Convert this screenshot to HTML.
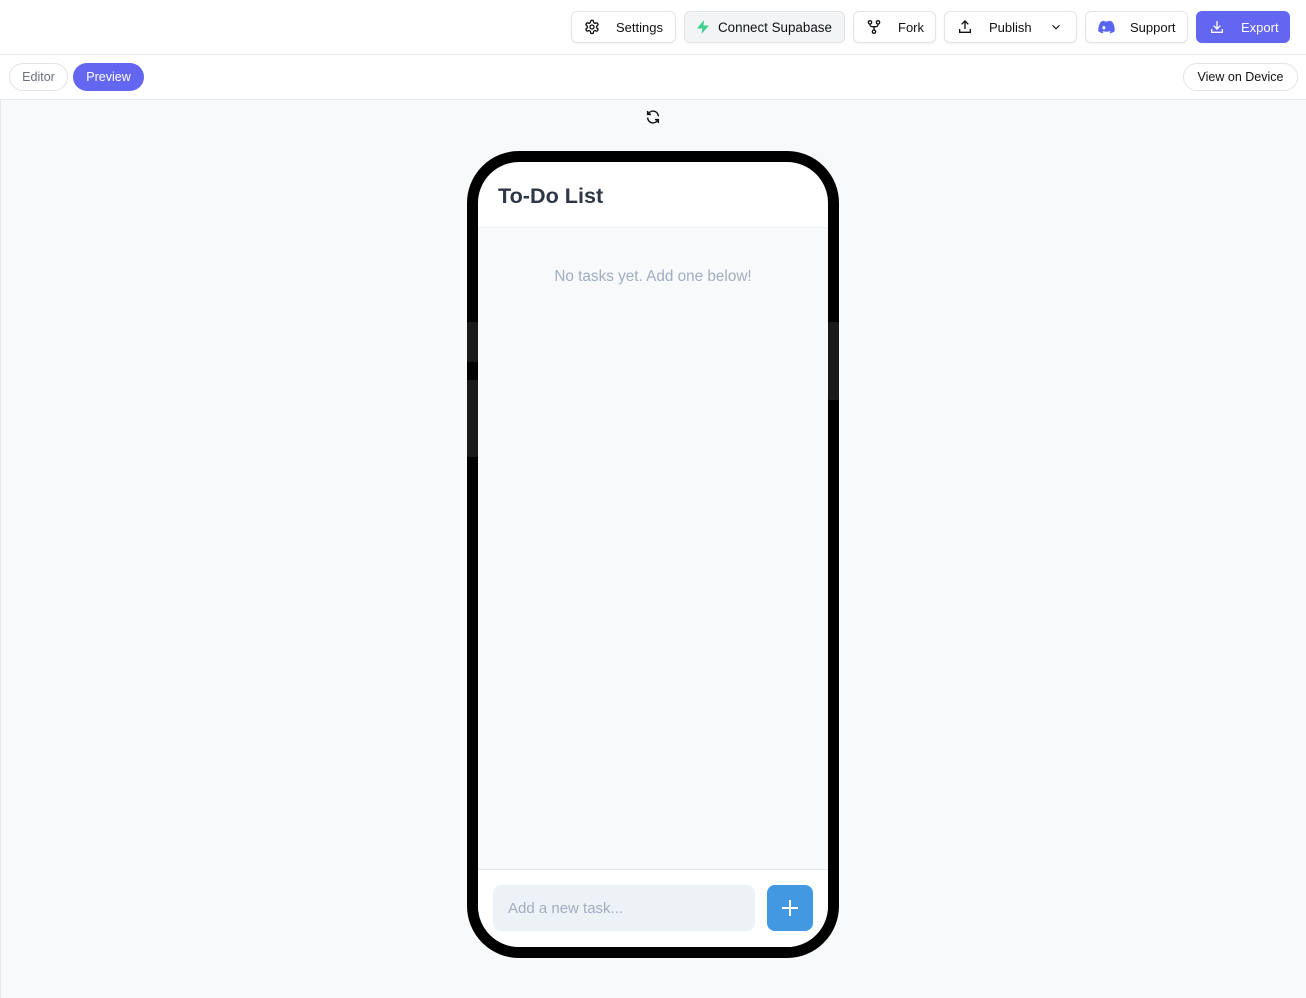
<!DOCTYPE html>
<html><head><style>
*{box-sizing:border-box;margin:0;padding:0}
body{width:1306px;height:998px;overflow:hidden;font-family:"Liberation Sans",sans-serif;background:#f8f9fb;position:relative}
.top{position:absolute;left:0;top:0;width:1306px;height:55px;background:#fff;border-bottom:1px solid #e5e7eb}
.btn{position:absolute;top:11px;height:32px;border:1px solid #e2e4e8;border-radius:6px;background:#fff;font-size:13px;color:#111;display:flex;align-items:center;box-shadow:0 1px 2px rgba(0,0,0,.05)}
.btn svg{position:absolute}
.bar2{position:absolute;left:0;top:55px;width:1306px;height:45px;background:#fff;border-bottom:1px solid #e5e7eb}
.pill{position:absolute;top:8px;height:28px;border-radius:14px;font-size:12.5px;display:flex;align-items:center;justify-content:center}
.phone{position:absolute;left:467px;top:151px;width:372px;height:807px;border:11px solid #000;border-radius:52px;background:#fff;overflow:hidden}
.side{position:absolute;background:#1a1a1a;width:11px;border-radius:2px}
</style></head><body>
<div class="top">
 <div class="btn" style="left:571px;width:105px"><svg style="left:12px" width="16" height="16" viewBox="0 0 24 24" fill="none" stroke="#111" stroke-width="2"><circle cx="12" cy="12" r="3"/><path d="M12.2 2h-.4a2 2 0 0 0-2 2v.2a2 2 0 0 1-1 1.7l-.4.3a2 2 0 0 1-2 0l-.2-.1a2 2 0 0 0-2.7.7l-.2.4a2 2 0 0 0 .7 2.7l.2.1a2 2 0 0 1 1 1.7v.5a2 2 0 0 1-1 1.7l-.2.1a2 2 0 0 0-.7 2.7l.2.4a2 2 0 0 0 2.7.7l.2-.1a2 2 0 0 1 2 0l.4.2a2 2 0 0 1 1 1.7v.2a2 2 0 0 0 2 2h.4a2 2 0 0 0 2-2v-.2a2 2 0 0 1 1-1.7l.4-.2a2 2 0 0 1 2 0l.2.1a2 2 0 0 0 2.7-.7l.2-.4a2 2 0 0 0-.7-2.7l-.2-.1a2 2 0 0 1-1-1.7v-.5a2 2 0 0 1 1-1.7l.2-.1a2 2 0 0 0 .7-2.7l-.2-.4a2 2 0 0 0-2.7-.7l-.2.1a2 2 0 0 1-2 0l-.4-.3a2 2 0 0 1-1-1.7V4a2 2 0 0 0-2-2z"/></svg><span style="position:absolute;left:44px">Settings</span></div>
 <div class="btn" style="left:684px;width:161px;background:#f3f4f6"><svg style="left:10px" width="16" height="16" viewBox="0 0 16 16"><path d="M9 1 2 9.5h5.5L6.5 15 14 6.5H8.5z" fill="#3ecf8e"/></svg><span style="position:absolute;left:33px;font-size:13.4px">Connect Supabase</span></div>
 <div class="btn" style="left:853px;width:83px"><svg style="left:12px" width="16" height="16" viewBox="0 0 24 24" fill="none" stroke="#111" stroke-width="2"><circle cx="6" cy="5" r="2.5"/><circle cx="18" cy="5" r="2.5"/><circle cx="12" cy="19" r="2.5"/><path d="M6 7.5v1a3 3 0 0 0 3 3h6a3 3 0 0 0 3-3v-1M12 11.5v5"/></svg><span style="position:absolute;left:44px">Fork</span></div>
 <div class="btn" style="left:944px;width:133px"><svg style="left:12px" width="16" height="16" viewBox="0 0 24 24" fill="none" stroke="#111" stroke-width="2"><path d="M12 15V3M7 8l5-5 5 5M4 15v5h16v-5"/></svg><span style="position:absolute;left:44px">Publish</span><svg style="left:104px" width="14" height="14" viewBox="0 0 24 24" fill="none" stroke="#111" stroke-width="2"><path d="M6 9l6 6 6-6"/></svg></div>
 <div class="btn" style="left:1085px;width:103px"><svg style="left:12px" width="17" height="14" viewBox="0 0 24 18"><path d="M20 1.5A19.8 19.8 0 0 0 15.1 0l-.6 1.3a18 18 0 0 0-5.1 0L8.9 0A19.7 19.7 0 0 0 4 1.5C.9 6.2 0 10.7.5 15.2A20 20 0 0 0 6.5 18l1.3-2.1a13 13 0 0 1-2-1l.5-.4a14 14 0 0 0 11.4 0l.5.4a13 13 0 0 1-2 1l1.3 2.1a20 20 0 0 0 6-3c.6-5.2-.8-9.7-3.5-13.5zM8.3 12.4c-1.2 0-2.1-1.1-2.1-2.4s.9-2.4 2.1-2.4 2.2 1.1 2.1 2.4c0 1.3-.9 2.4-2.1 2.4zm7.4 0c-1.200-2.1-1.1-2.1-2.4s.9-2.4 2.1-2.4 2.2 1.1 2.1 2.4c0 1.3-.9 2.4-2.1 2.4z" fill="#5865f2"/></svg><span style="position:absolute;left:44px">Support</span></div>
 <div class="btn" style="left:1196px;width:94px;background:#6366f1;border-color:#6366f1;color:#fff"><svg style="left:12px" width="16" height="16" viewBox="0 0 24 24" fill="none" stroke="#fff" stroke-width="2"><path d="M12 3v12M7 10l5 5 5-5M4 15v5h16v-5"/></svg><span style="position:absolute;left:44px">Export</span></div>
</div>
<div class="bar2">
 <div class="pill" style="left:9px;width:59px;border:1px solid #e2e4e8;color:#6b7280">Editor</div>
 <div class="pill" style="left:73px;width:71px;background:#6366f1;color:#fff">Preview</div>
 <div class="pill" style="left:1183px;width:115px;border:1px solid #e2e4e8;color:#111;background:#fff">View on Device</div>
</div>
<div style="position:absolute;left:0;top:100px;width:1px;height:898px;background:#e5e7eb"></div>
<svg style="position:absolute;left:645px;top:109px" width="16" height="16" viewBox="0 0 24 24" fill="none" stroke="#111" stroke-width="2.2"><path d="M20 11a8 8 0 0 0-14.5-4.5L4 8M4 3v5h5M4 13a8 8 0 0 0 14.5 4.5L20 16M20 21v-5h-5"/></svg>
<div class="phone">
 <div style="height:66px;border-bottom:1px solid #eef1f4;padding:21px 0 0 20px;font-size:21.6px;font-weight:bold;color:#2d3748">To-Do List</div>
 <div style="position:absolute;top:66px;left:0;right:0;height:641px;background:#f7f9fb;text-align:center;padding-top:40px;font-size:15.3px;color:#a0aec0">No tasks yet. Add one below!</div>
 <div style="position:absolute;top:707px;left:0;right:0;height:78px;border-top:1px solid #e2e8f0;background:#fff">
  <div style="position:absolute;left:15px;top:15px;width:262px;height:46px;background:#edf2f7;border-radius:8px;font-size:15px;color:#a0aec0;padding:15px 0 0 15px">Add a new task...</div>
  <div style="position:absolute;left:289px;top:15px;width:46px;height:46px;background:#4299e1;border-radius:8px"><svg style="position:absolute;left:13px;top:13px" width="20" height="20" viewBox="0 0 20 20" stroke="#fff" stroke-width="2"><path d="M10 2v16M2 10h16"/></svg></div>
 </div>
</div>
<div class="side" style="left:467px;top:322px;height:40px"></div>
<div class="side" style="left:467px;top:380px;height:77px"></div>
<div class="side" style="left:828px;top:322px;height:78px"></div>
</body></html>
